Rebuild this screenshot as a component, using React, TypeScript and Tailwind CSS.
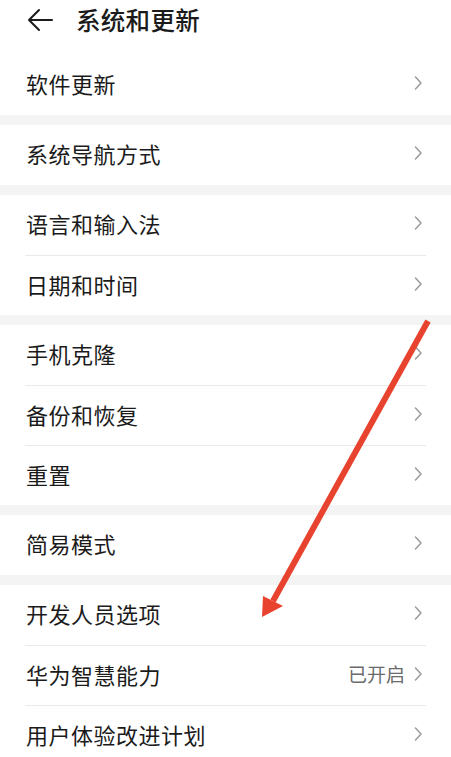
import React from "react";

const font = { fontFamily: '"Noto Sans CJK SC", "Noto Sans", sans-serif' };

function Chevron() {
  return (
    <svg width="10" height="16" viewBox="0 0 10 16" className="shrink-0">
      <path d="M2.5 2 L8 8 L2.5 14" fill="none" stroke="#9a9a9a" strokeWidth="1.5" strokeLinecap="round" strokeLinejoin="round" />
    </svg>
  );
}

function Row({ label, value, divider }: { label: string; value?: string; divider?: boolean }) {
  return (
    <div className={`mx-[25px] h-[60px] flex items-center justify-between pl-[1px] pr-[3px] pb-[4px] ${divider ? "border-t border-[#e9e9e9]" : ""}`}>
      <span className="text-[22px] tracking-[0.5px] text-[#1b1b1b] leading-none">{label}</span>
      <div className="flex items-center gap-[8px]">
        {value && <span className="text-[19px] text-[#6b6b6b] leading-none">{value}</span>}
        <Chevron />
      </div>
    </div>
  );
}

function Band() {
  return <div className="h-[10px] bg-[#f4f4f4]" />;
}

export default function App() {
  return (
    <div className="relative w-[451px] h-[757px] overflow-hidden bg-white" style={font}>
      <div className="h-[55px] flex items-start pt-[8px] pl-[27px]">
        <svg width="26" height="24" viewBox="0 0 26 24" className="shrink-0">
          <path d="M12 2 L2 12 L12 22 M2 12 L25 12" fill="none" stroke="#1b1b1b" strokeWidth="2" strokeLinecap="round" strokeLinejoin="round" />
        </svg>
        <span className="ml-[23px] text-[24.5px] font-medium text-[#1b1b1b] leading-none tracking-[0.3px]">系统和更新</span>
      </div>
      <Row label="软件更新" />
      <Band />
      <Row label="系统导航方式" />
      <Band />
      <Row label="语言和输入法" />
      <Row label="日期和时间" divider />
      <Band />
      <Row label="手机克隆" />
      <Row label="备份和恢复" divider />
      <Row label="重置" divider />
      <Band />
      <Row label="简易模式" />
      <Band />
      <Row label="开发人员选项" />
      <Row label="华为智慧能力" value="已开启" divider />
      <Row label="用户体验改进计划" divider />

      <svg className="absolute left-0 top-0 pointer-events-none" width="451" height="757" viewBox="0 0 451 757">
        <line x1="428" y1="321" x2="273" y2="601" stroke="#e8432f" strokeWidth="6" />
        <polygon points="262,617 263,596 283,606" fill="#e8432f" />
      </svg>
    </div>
  );
}
